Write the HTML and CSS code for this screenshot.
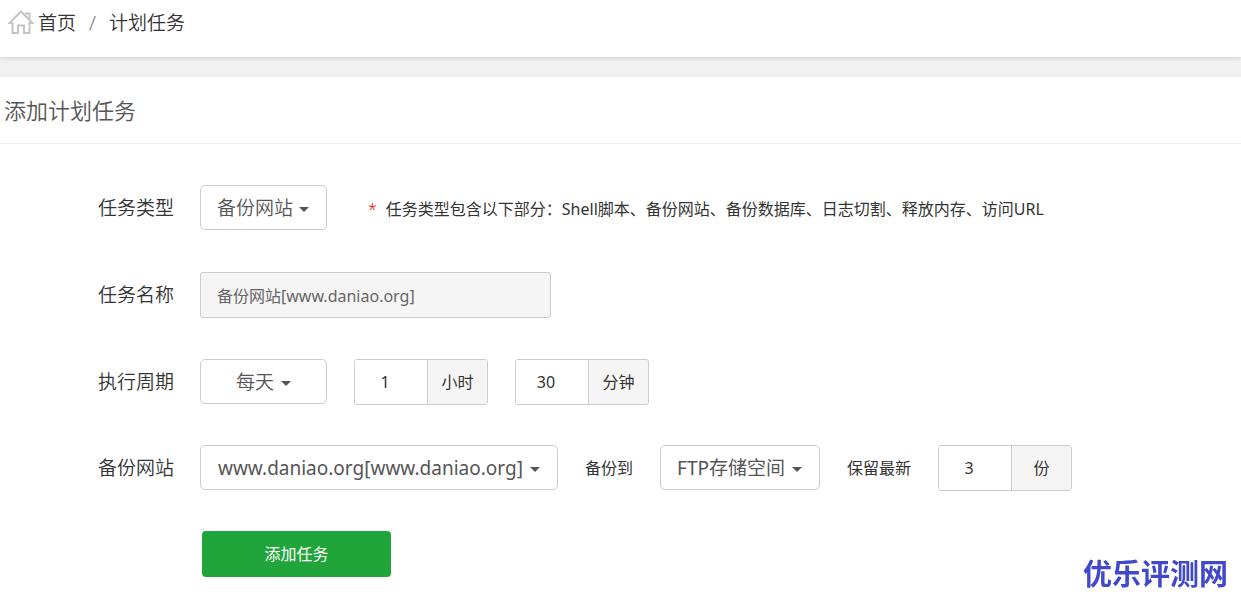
FILE: index.html
```
<!DOCTYPE html>
<html lang="zh-CN">
<head>
<meta charset="utf-8">
<title>计划任务</title>
<meta name="viewport" content="width=device-width, initial-scale=1">
<link rel="stylesheet" href="styles.css">
</head>
<body>
<nav class="breadcrumb" aria-label="位置">
  <svg class="home-icon" viewBox="0 0 26 26" aria-hidden="true">
    <path d="M1.500 13 13 1.500 24.500 13H21.500V23H16V15.500H10V23H4.500V13Z"/>
    <path d="M17 3.500h4.500V9"/>
  </svg>
  <a class="crumb" href="#">首页</a>
  <span class="slash">/</span>
  <span class="crumb">计划任务</span>
</nav>
<main class="panel">
  <h1 class="panel-title">添加计划任务</h1>
  <form class="task-form">
    <div class="row">
      <label class="row-label" for="type">任务类型</label>
      <span class="dropdown type"><select id="type"><option>备份网站</option></select></span>
      <p class="hint"><span class="star">*</span>任务类型包含以下部分：Shell脚本、备份网站、备份数据库、日志切割、释放内存、访问URL</p>
    </div>
    <div class="row">
      <label class="row-label" for="name">任务名称</label>
      <input class="name-input" id="name" type="text" value="备份网站[www.daniao.org]" readonly>
    </div>
    <div class="row">
      <label class="row-label" for="cycle">执行周期</label>
      <span class="dropdown cycle"><select id="cycle"><option>每天</option></select></span>
      <span class="number"><input id="hour" type="text" value="1"><label class="unit" for="hour">小时</label></span>
      <span class="number"><input id="minute" type="text" value="30"><label class="unit" for="minute">分钟</label></span>
    </div>
    <div class="row">
      <label class="row-label" for="site">备份网站</label>
      <span class="dropdown site"><select id="site"><option>www.daniao.org[www.daniao.org]</option></select></span>
      <label class="inline-label" for="target">备份到</label>
      <span class="dropdown target"><select id="target"><option>FTP存储空间</option></select></span>
      <label class="inline-label" for="keep">保留最新</label>
      <span class="number"><input id="keep" type="text" value="3"><label class="unit" for="keep">份</label></span>
    </div>
    <div class="row actions">
      <button class="submit" type="button">添加任务</button>
    </div>
  </form>
</main>
<div class="watermark">优乐评测网</div>
</body>
</html>
```
FILE: styles.css
```
* { box-sizing: border-box; }
body {
  margin: 0;
  background: #fff;
  color: #333;
  font: 400 16px/24px "Noto Sans", "Noto Sans CJK SC", sans-serif;
}
input, select, button { font: inherit; color: inherit; margin: 0; }

.breadcrumb {
  display: flex;
  align-items: center;
  height: 57px;
  padding: 0 8px 11px;
  font-size: 19px;
  font-weight: 350;
  box-shadow: 0 1px 4px rgba(0, 0, 0, .15);
  position: relative;
}
.home-icon {
  width: 26px;
  height: 26px;
  margin-right: 4px;
  fill: none;
  stroke: #c4c4c4;
  stroke-width: 2;
}
.crumb { color: #333; text-decoration: none; }
.slash { margin: 0 13px; color: #777; font-size: 20px; }

.panel { border-top: 20px solid #f1f1f1; }
.panel-title {
  margin: 0;
  padding: 17px 4px;
  border-bottom: 1px solid #eee;
  color: #555;
  font-size: 22px;
  font-weight: 350;
  line-height: 32px;
}
.task-form { padding: 41px 0 24px 98px; }
.row { display: flex; height: 46px; margin-bottom: 41px; }
.row:nth-child(n+3) { margin-bottom: 40px; }
.row.actions { margin-bottom: 0; padding-left: 104px; }
.row-label { width: 102px; font-size: 19px; font-weight: 350; line-height: 46px; }

.dropdown { position: relative; height: 45px; }
.dropdown select {
  width: 100%;
  height: 100%;
  padding: 0 16px;
  border: 1px solid #ccc;
  border-radius: 5px;
  background: #fff;
  color: #555;
  font-size: 19px;
  font-weight: 350;
  appearance: none;
}
.dropdown::after {
  content: "";
  position: absolute;
  top: 22px;
  right: 18px;
  border: 5px solid transparent;
  border-top-color: #555;
  border-bottom: 0;
  pointer-events: none;
}
.type, .cycle { width: 127px; }
.cycle select { padding-left: 35px; }
.cycle::after { right: 36px; }
.site { width: 358px; }
.target { width: 160px; }
.site select, .target select { font-weight: 400; }
.site select { padding-left: 17px; }

.hint { margin: 0 0 0 41px; line-height: 48px; }
.star { margin-right: 9px; color: #f00; font-weight: 300; }
.name-input {
  width: 351px;
  height: 46px;
  padding: 0 16px;
  border: 1px solid #ccc;
  border-radius: 3px;
  background: #f5f5f5;
  color: #666;
}
.number {
  display: flex;
  height: 46px;
  margin-left: 27px;
  border: 1px solid #ccc;
  border-radius: 3px;
  overflow: hidden;
}
.number input {
  width: 72px;
  padding: 0 12px 0 0;
  border: 0;
  text-align: center;
  background: #fff;
}
.unit {
  width: 60px;
  border-left: 1px solid #ccc;
  background: #f5f5f5;
  line-height: 44px;
  text-align: center;
}
.inline-label { margin-left: 27px; line-height: 46px; }
.inline-label + .dropdown { margin-left: 27px; }
.submit {
  width: 189px;
  height: 46px;
  border: 0;
  border-radius: 4px;
  background: #20a53a;
  color: #fff;
}
.watermark {
  position: fixed;
  right: 13px;
  bottom: 11px;
  color: #4048cc;
  font: 700 29px/36px "Noto Sans CJK SC", sans-serif;
}
```
